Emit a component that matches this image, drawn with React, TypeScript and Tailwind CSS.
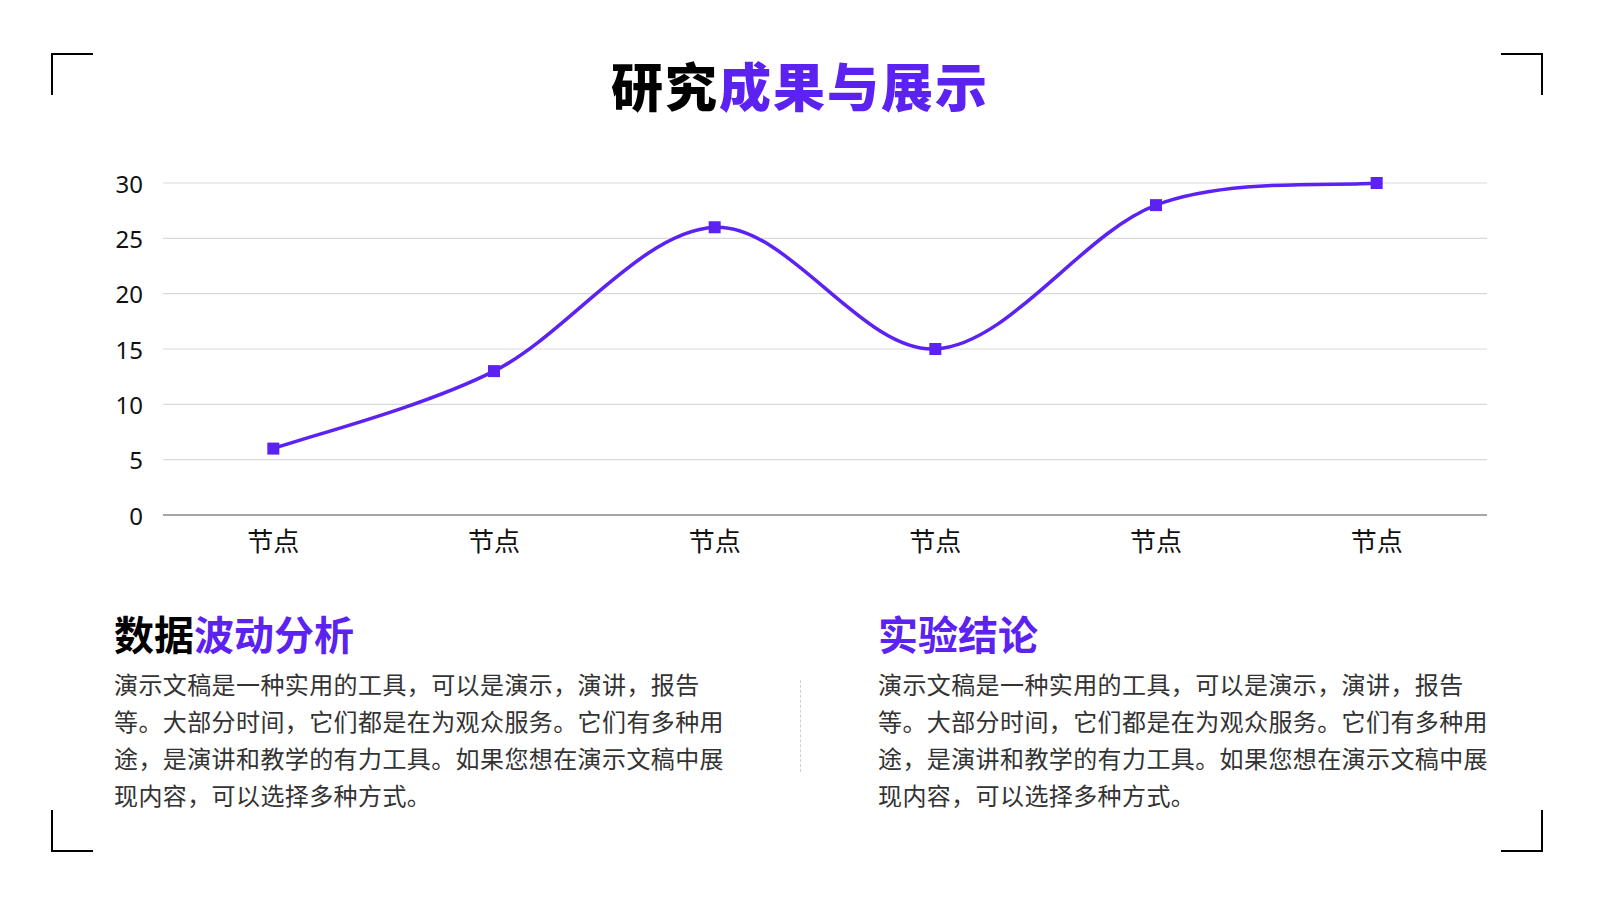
import React from 'react';

const PURPLE = '#5b22f2';

const values = [6, 13, 26, 15, 28, 30];
const ticks = [0, 5, 10, 15, 20, 25, 30];

// plot area inside the svg (svg sits at x=100, y=160 on the page)
const LEFT = 63;
const RIGHT = 1387;
const BASE = 355;
const TOP = 23;

const xAt = (i: number) => LEFT + ((RIGHT - LEFT) / values.length) * (i + 0.5);
const yAt = (v: number) => BASE - ((BASE - TOP) / 30) * v;

function smoothPath(pts: [number, number][]) {
  let d = `M ${pts[0][0]} ${pts[0][1]}`;
  for (let i = 0; i < pts.length - 1; i++) {
    const p0 = pts[i - 1] ?? pts[i];
    const p1 = pts[i];
    const p2 = pts[i + 1];
    const p3 = pts[i + 2] ?? p2;
    const c1x = p1[0] + (p2[0] - p0[0]) / 6;
    const c1y = p1[1] + (p2[1] - p0[1]) / 6;
    const c2x = p2[0] - (p3[0] - p1[0]) / 6;
    const c2y = p2[1] - (p3[1] - p1[1]) / 6;
    d += ` C ${c1x} ${c1y} ${c2x} ${c2y} ${p2[0]} ${p2[1]}`;
  }
  return d;
}

function Chart() {
  const pts = values.map((v, i) => [xAt(i), yAt(v)] as [number, number]);
  return (
    <svg width="1400" height="400" viewBox="0 0 1400 400" className="block ml-[100px] mt-[38px]">
      {ticks.map((t) => (
        <g key={t}>
          <line
            x1={LEFT}
            x2={RIGHT}
            y1={yAt(t)}
            y2={yAt(t)}
            stroke={t === 0 ? '#a6a6a6' : '#d9d9d9'}
            strokeWidth={t === 0 ? 2 : 1.2}
          />
          <text
            x={43}
            y={yAt(t)}
            textAnchor="end"
            dominantBaseline="central"
            fontSize="24"
            fill="#111"
            fontFamily="'Noto Sans', 'Noto Sans CJK SC', sans-serif"
          >
            {t}
          </text>
        </g>
      ))}
      <path d={smoothPath(pts)} fill="none" stroke={PURPLE} strokeWidth="3.5" strokeLinecap="round" />
      {pts.map(([x, y], i) => (
        <rect key={i} x={x - 6} y={y - 6} width="12" height="12" fill={PURPLE} />
      ))}
      {values.map((_, i) => (
        <text
          key={i}
          x={xAt(i)}
          y={379}
          textAnchor="middle"
          dominantBaseline="central"
          fontSize="26"
          fill="#111"
          fontFamily="'Noto Sans CJK SC', sans-serif"
        >
          节点
        </text>
      ))}
    </svg>
  );
}

const body =
  '演示文稿是一种实用的工具，可以是演示，演讲，报告等。大部分时间，它们都是在为观众服务。它们有多种用途，是演讲和教学的有力工具。如果您想在演示文稿中展现内容，可以选择多种方式。';

function Block({ title }: { title: React.ReactNode }) {
  return (
    <div>
      <h2 className="text-[40px] leading-[48px] font-bold">{title}</h2>
      <p className="mt-[7px] text-[24px] leading-[37px] tracking-[0.4px] text-[#333]">{body}</p>
    </div>
  );
}

export default function App() {
  return (
    <main className="relative w-[1600px] h-[900px] overflow-hidden bg-white text-black font-['Noto_Sans','Noto_Sans_CJK_SC',sans-serif]">
      {/* corner brackets framing the slide */}
      <div className="absolute left-[51px] top-[53px] w-[42px] h-[42px] border-l-2 border-t-2 border-black" />
      <div className="absolute right-[57px] top-[53px] w-[42px] h-[42px] border-r-2 border-t-2 border-black" />
      <div className="absolute left-[51px] bottom-[48px] w-[42px] h-[42px] border-l-2 border-b-2 border-black" />
      <div className="absolute right-[57px] bottom-[48px] w-[42px] h-[42px] border-r-2 border-b-2 border-black" />

      <h1 className="pt-[52px] text-center text-[52px] leading-[70px] font-black tracking-[2px]">
        研究<span className="text-[#5b22f2]">成果与展示</span>
      </h1>

      <Chart />

      <section className="flex items-start pl-[114px] pt-[51px]">
        <div className="w-[614px]">
          <Block
            title={
              <>
                数据<span className="text-[#5b22f2]">波动分析</span>
              </>
            }
          />
        </div>
        <div className="ml-[72px] mt-[69px] h-[92px] border-l border-dashed border-[#cfcfcf]" />
        <div className="ml-[77px] w-[614px]">
          <Block title={<span className="text-[#5b22f2]">实验结论</span>} />
        </div>
      </section>
    </main>
  );
}
